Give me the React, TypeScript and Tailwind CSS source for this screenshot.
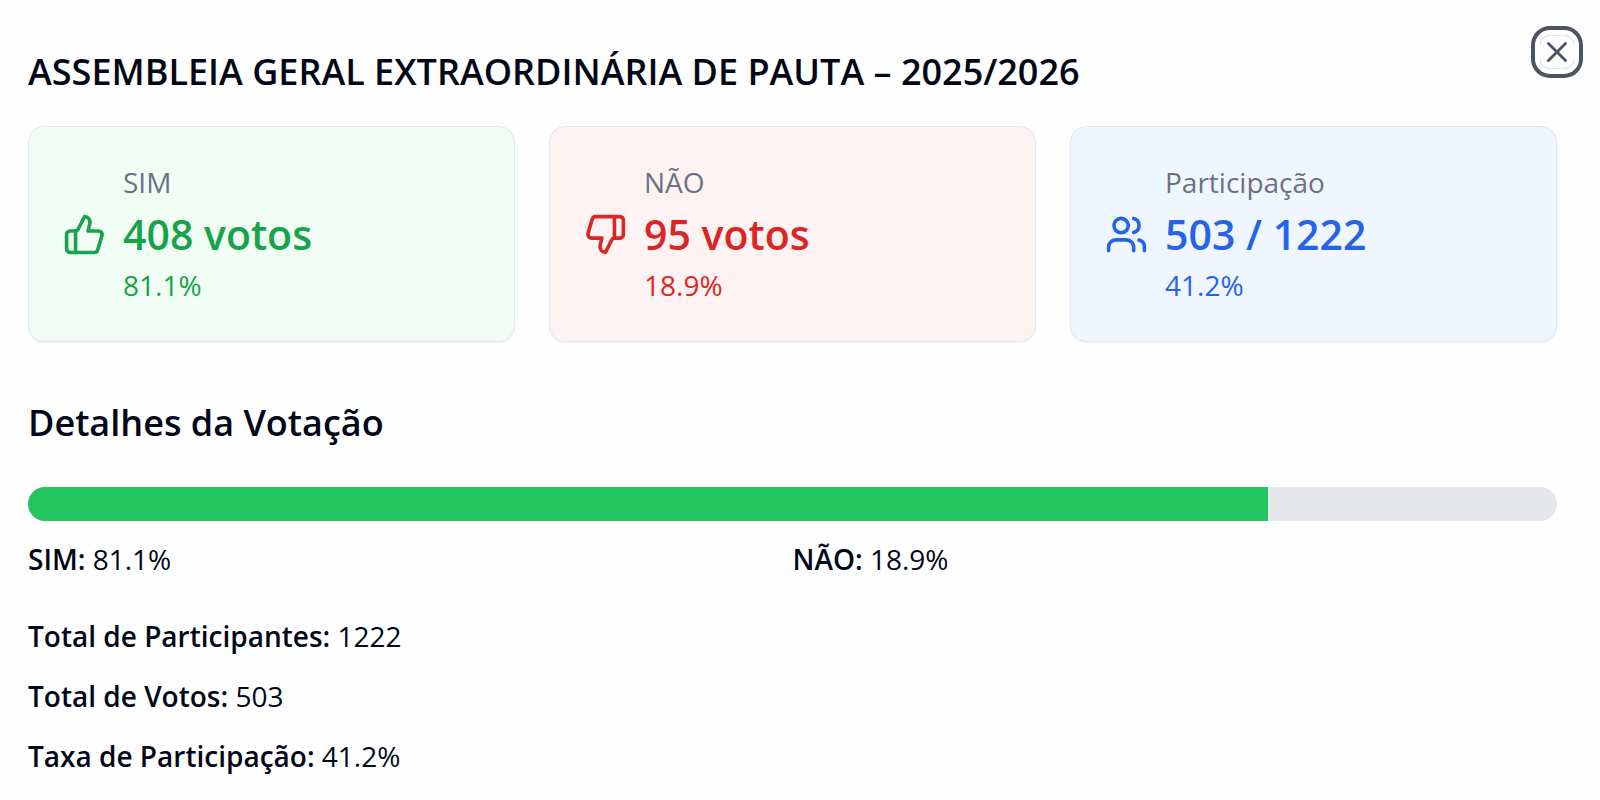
import { ThumbsDown, ThumbsUp, Users, X } from "lucide-react";
import type { LucideIcon } from "lucide-react";
import clsx from "clsx";

interface StatCardProps {
  icon: LucideIcon;
  label: string;
  value: string;
  percent: string;
  background: string;
  color: string;
}

const results = {
  title: "ASSEMBLEIA GERAL EXTRAORDINÁRIA DE PAUTA – 2025/2026",
  yes: 408,
  no: 95,
  participants: 1222,
};

const totalVotes = results.yes + results.no;

function percentage(part: number, total: number) {
  return `${((part / total) * 100).toFixed(1)}%`;
}

function StatCard({ icon: Icon, label, value, percent, background, color }: StatCardProps) {
  return (
    <div className={clsx("flex items-center gap-[17px] rounded-2xl border border-slate-200 p-[34px] shadow-xs", background)}>
      <Icon className={clsx("size-[43px] shrink-0", color)} aria-hidden="true" />
      <div>
        <p className="text-[28px] leading-[43px] text-gray-500">{label}</p>
        <p className={clsx("text-[41px] leading-[60px] font-semibold", color)}>{value}</p>
        <p className={clsx("text-[28px] leading-[43px]", color)}>{percent}</p>
      </div>
    </div>
  );
}

function Detail({ label, value }: { label: string; value: string | number }) {
  return (
    <p>
      <strong className="font-semibold">{label}:</strong> {value}
    </p>
  );
}

export default function App() {
  const yesPercent = percentage(results.yes, totalVotes);
  const noPercent = percentage(results.no, totalVotes);
  const turnout = percentage(totalVotes, results.participants);

  return (
    <div
      role="dialog"
      aria-labelledby="results-title"
      className="relative min-h-screen bg-[#fefefe] pt-[52px] pr-[43px] pb-4 pl-7 font-['Open_Sans','Noto_Sans',sans-serif] text-[#020817]"
    >
      <h2 id="results-title" className="text-[36px] leading-10 font-semibold">
        {results.title}
      </h2>

      <div className="mt-[34px] grid grid-cols-3 gap-[34px]">
        <StatCard
          icon={ThumbsUp}
          label="SIM"
          value={`${results.yes} votos`}
          percent={yesPercent}
          background="bg-[#f0fdf4]"
          color="text-[#16a34a]"
        />
        <StatCard
          icon={ThumbsDown}
          label="NÃO"
          value={`${results.no} votos`}
          percent={noPercent}
          background="bg-[#fef2f2]"
          color="text-[#dc2626]"
        />
        <StatCard
          icon={Users}
          label="Participação"
          value={`${totalVotes} / ${results.participants}`}
          percent={turnout}
          background="bg-[#eff6ff]"
          color="text-[#2563eb]"
        />
      </div>

      <h3 className="mt-[51px] text-[36px] leading-[60px] font-semibold">Detalhes da Votação</h3>

      <div className="mt-[34px] h-[34px] overflow-hidden rounded-full bg-[#e5e7eb]">
        <div className="h-full bg-[#22c55e]" style={{ width: yesPercent }} />
      </div>

      <div className="mt-[17px] grid grid-cols-2 text-[28px] leading-[43px]">
        <Detail label="SIM" value={yesPercent} />
        <Detail label="NÃO" value={noPercent} />
      </div>

      <div className="mt-[34px] space-y-[17px] text-[28px] leading-[43px]">
        <Detail label="Total de Participantes" value={results.participants} />
        <Detail label="Total de Votos" value={totalVotes} />
        <Detail label="Taxa de Participação" value={turnout} />
      </div>

      <button
        type="button"
        aria-label="Fechar"
        className="absolute top-[35px] right-[26px] flex size-[34px] items-center justify-center rounded-[10px] border-y border-gray-200 text-[#4d5361] ring-4 ring-[#4d5361] ring-offset-[5px] ring-offset-white"
      >
        <X className="size-[34px] shrink-0" strokeWidth={2} />
      </button>
    </div>
  );
}
